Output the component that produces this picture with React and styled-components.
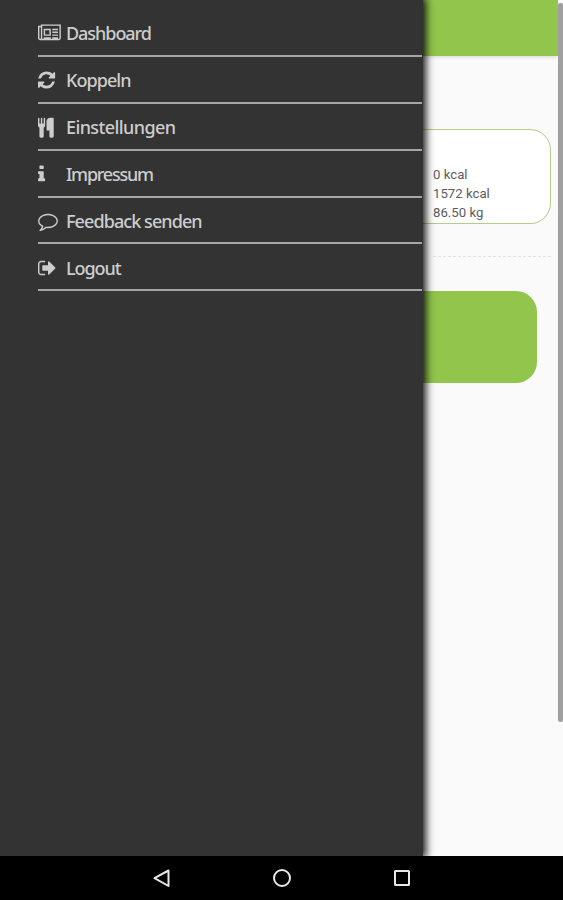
import React from "react";
import styled, { createGlobalStyle } from "styled-components";

const GlobalStyle = createGlobalStyle`
  * {
    box-sizing: border-box;
  }
  body {
    margin: 0;
    background: #000;
  }
`;

const Screen = styled.div`
  width: 563px;
  height: 900px;
  display: flex;
  flex-direction: column;
  overflow: hidden;
  background: #000;
`;

const Main = styled.div`
  height: 856px;
  display: flex;
`;

const Drawer = styled.nav`
  width: 423px;
  flex-shrink: 0;
  padding: 10px 1px 0 37.5px;
  background: #333;
  box-shadow: 1px 0 8px 2px rgba(0, 0, 0, 0.9);
  z-index: 1;
`;

const MenuItem = styled.a`
  height: 46.9px;
  display: flex;
  align-items: center;
  padding-top: 2px;
  border-bottom: 2px solid #a6a6a6;
  color: #cdcdcd;
`;

const IconBox = styled.span`
  width: 28.5px;
  height: 20px;
  display: flex;
  flex-shrink: 0;
  svg {
    height: 20px;
    fill: currentColor;
    overflow: visible;
  }
`;

const Label = styled.span`
  font-family: "Noto Sans", sans-serif;
  font-size: 18px;
  font-weight: 500;
  line-height: 24px;
  letter-spacing: ${(props) => props.$spacing}px;
  white-space: nowrap;
`;

const Content = styled.main`
  flex: 1;
  display: flex;
  flex-direction: column;
  background: #fafafa;
`;

const Header = styled.header`
  height: 56px;
  flex-shrink: 0;
  background: #92c54b;
  box-shadow: 0 1px 4px rgba(0, 0, 0, 0.15);
`;

const Card = styled.section`
  height: 95px;
  margin: 73px 7px 0 0;
  padding: 35px 0 0 10px;
  border: 1px solid #b3ce8a;
  border-left: none;
  border-radius: 0 21px 21px 0;
  background: #fff;
`;

const Value = styled.p`
  margin: 0;
  font-family: Roboto, sans-serif;
  font-size: 13.2px;
  line-height: 19px;
  color: #5c5c5c;
`;

const Divider = styled.div`
  margin: 32px 7px 0 10px;
  border-top: 1px dashed #e2e2e2;
`;

const GreenButton = styled.div`
  width: 113.5px;
  height: 92px;
  margin-top: 34px;
  border-radius: 0 21px 21px 0;
  background: #92c54b;
`;

const ScrollTrack = styled.div`
  width: 5px;
  background: #fafafa;
  z-index: 1;
`;

const ScrollThumb = styled.div`
  height: 719px;
  margin-top: 3px;
  border-radius: 2px;
  background: #a0a0a0;
`;

const NavBar = styled.footer`
  height: 44px;
  display: flex;
  justify-content: center;
  align-items: center;
  gap: 100px;
  background: #000;
`;

const items = [
  {
    label: "Dashboard",
    spacing: -1.05,
    viewBox: "0 -128 2048 1792",
    path: "M1024 512h-384v384h384v-384zm128 640v128h-640v-128h640zm0-768v640h-640v-640h640zm640 768v128h-512v-128h512zm0-256v128h-512v-128h512zm0-256v128h-512v-128h512zm0-256v128h-512v-128h512zm-1536 832v-960h-128v960q0 26 19 45t45 19 45-19 19-45zm1664 0v-1088h-1536v1088q0 33-11 64h1483q26 0 45-19t19-45zm128-1216v1216q0 80-56 136t-136 56h-1664q-80 0-136-56t-56-136v-1088h256v-128h1792z",
  },
  {
    label: "Koppeln",
    spacing: -0.95,
    viewBox: "0 0 1536 1792",
    path: "M1511 1056q0 5-1 7-64 268-268 434.5t-478 166.5q-146 0-282.5-55t-243.5-157l-129 129q-19 19-45 19t-45-19-19-45v-448q0-26 19-45t45-19h448q26 0 45 19t19 45-19 45l-137 137q71 66 161 102t187 36q134 0 250-65t186-179q11-17 53-117 8-23 30-23h192q13 0 22.5 9.5t9.5 22.5zm25-800v448q0 26-19 45t-45 19h-448q-26 0-45-19t-19-45 19-45l138-138q-148-137-349-137-134 0-250 65t-186 179q-11 17-53 117-8 23-30 23h-199q-13 0-22.5-9.5t-9.5-22.5v-7q65-268 270-434.5t480-166.5q146 0 284 55.5t245 156.5l130-129q19-19 45-19t45 19 19 45z",
  },
  {
    label: "Einstellungen",
    spacing: -0.6,
    viewBox: "0 0 1408 1792",
    path: "M640 128v640q0 61-35.5 111t-92.5 70v779q0 52-38 90t-90 38h-128q-52 0-90-38t-38-90v-779q-57-20-92.5-70t-35.5-111v-640q0-26 19-45t45-19 45 19 19 45v416q0 26 19 45t45 19 45-19 19-45v-416q0-26 19-45t45-19 45 19 19 45v416q0 26 19 45t45 19 45-19 19-45v-416q0-26 19-45t45-19 45 19 19 45zm768 0v1600q0 52-38 90t-90 38h-128q-52 0-90-38t-38-90v-512h-224q-13 0-22.5-9.5t-9.5-22.5v-800q0-132 94-226t226-94h256q26 0 45 19t19 45z",
  },
  {
    label: "Impressum",
    spacing: -1.25,
    viewBox: "0 0 640 1792",
    path: "M640 1344v128q0 26-19 45t-45 19h-512q-26 0-45-19t-19-45v-128q0-26 19-45t45-19h64v-384h-64q-26 0-45-19t-19-45v-128q0-26 19-45t45-19h384q26 0 45 19t19 45v576h64q26 0 45 19t19 45zm-128-1152v192q0 26-19 45t-45 19h-256q-26 0-45-19t-19-45v-192q0-26 19-45t45-19h256q26 0 45 19t19 45z",
  },
  {
    label: "Feedback senden",
    spacing: -0.92,
    viewBox: "0 0 1792 1792",
    path: "M896 384q-204 0-381.5 69.5t-282 187.5-104.5 255q0 112 71.5 213.5t201.5 175.5l87 50-27 96q-24 91-70 172 152-63 275-171l43-38 57 6q69 8 130 8 204 0 381.5-69.5t282-187.5 104.5-255-104.5-255-282-187.5-381.5-69.5zm896 512q0 174-120 321.5t-326 233-450 85.5q-70 0-145-8-198 175-460 242-49 14-114 22h-5q-15 0-27-10.5t-16-27.5v-1q-3-4-.5-12t2-10 4.5-9.5l6-9 7-8.5 8-9q7-8 31-34.5t34.5-38 31-39.5 32.5-51 27-59 26-76q-157-89-247.5-220t-90.5-281q0-174 120-321.5t326-233 450-85.5 450 85.5 326 233 120 321.5z",
  },
  {
    label: "Logout",
    spacing: -1.05,
    viewBox: "0 0 1568 1792",
    path: "M640 1440q0 4 1 20t.5 26.5-3 23.5-10 19.5-20.5 6.5h-320q-119 0-203.5-84.5t-84.5-203.5v-704q0-119 84.5-203.5t203.5-84.5h320q13 0 22.5 9.5t9.5 22.5q0 4 1 20t.5 26.5-3 23.5-10 19.5-20.5 6.5h-320q-66 0-113 47t-47 113v704q0 66 47 113t113 47h312l11.5 1 11.5 3 8 5.5 7 9 2 13.5zm928-544q0 26-19 45l-544 544q-19 19-45 19t-45-19-19-45v-288h-448q-26 0-45-19t-19-45v-384q0-26 19-45t45-19h448v-288q0-26 19-45t45-19 45 19l544 544q19 19 19 45z",
  },
];

const values = ["0 kcal", "1572 kcal", "86.50 kg"];

function App() {
  return (
    <>
      <GlobalStyle />
      <Screen>
        <Main>
          <Drawer>
            {items.map((item) => (
              <MenuItem key={item.label}>
                <IconBox>
                  <svg viewBox={item.viewBox}>
                    <path d={item.path} />
                  </svg>
                </IconBox>
                <Label $spacing={item.spacing}>{item.label}</Label>
              </MenuItem>
            ))}
          </Drawer>
          <Content>
            <Header />
            <Card>
              {values.map((value) => (
                <Value key={value}>{value}</Value>
              ))}
            </Card>
            <Divider />
            <GreenButton />
          </Content>
          <ScrollTrack>
            <ScrollThumb />
          </ScrollTrack>
        </Main>
        <NavBar>
          <svg width="20" height="20" fill="none" stroke="#e8e8e8" strokeWidth="2">
            <path d="M16.5 2.5v15.5L2.5 10.2z" strokeLinejoin="round" />
          </svg>
          <svg width="20" height="20" fill="none" stroke="#e8e8e8" strokeWidth="2">
            <circle cx="10" cy="10" r="8" />
          </svg>
          <svg width="20" height="20" fill="none" stroke="#e8e8e8" strokeWidth="2">
            <rect x="3" y="3" width="14" height="14" rx="0.5" />
          </svg>
        </NavBar>
      </Screen>
    </>
  );
}

export default App;
